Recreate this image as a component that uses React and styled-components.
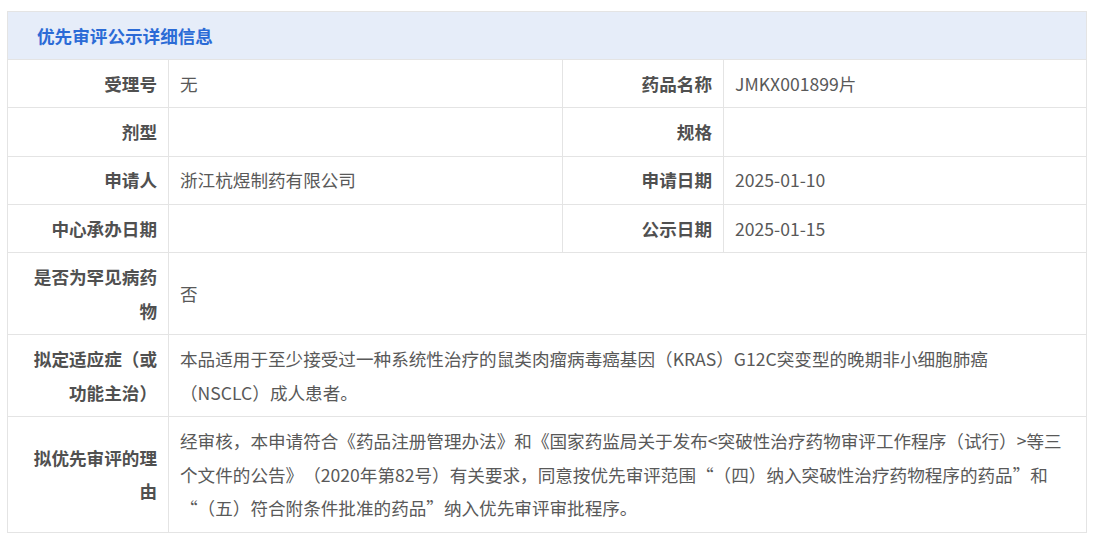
import React from 'react'
import styled, {createGlobalStyle} from 'styled-components'

const GlobalStyle = createGlobalStyle`
    body {
        margin: 0;
        background: #ffffff;
        font-family: "Noto Sans CJK SC", "Noto Sans", sans-serif;
        text-spacing-trim: space-all;
    }
`

// Data
const rows = [
    {pairs: [["受理号", "无"], ["药品名称", "JMKX001899片"]]},
    {pairs: [["剂型", ""], ["规格", ""]]},
    {pairs: [["申请人", "浙江杭煜制药有限公司"], ["申请日期", "2025-01-10"]]},
    {pairs: [["中心承办日期", ""], ["公示日期", "2025-01-15"]]},
    {label: "是否为罕见病药物", lines: ["否"]},
    {label: "拟定适应症（或功能主治）", lines: [
        "本品适用于至少接受过一种系统性治疗的鼠类肉瘤病毒癌基因（KRAS）G12C突变型的晚期非小细胞肺癌",
        "（NSCLC）成人患者。",
    ]},
    {label: "拟优先审评的理由", lines: [
        "经审核，本申请符合《药品注册管理办法》和《国家药监局关于发布<突破性治疗药物审评工作程序（试行）>等三",
        "个文件的公告》（2020年第82号）有关要求，同意按优先审评范围“（四）纳入突破性治疗药物程序的药品”和",
        "“（五）符合附条件批准的药品”纳入优先审评审批程序。",
    ]},
]

// UI Designs
const Page = styled.div`
    padding: 11px 15px 14px 7px;
`
const Panel = styled.div`
    width: 1080px;
    border: 1px solid #e4e4e4;
    box-sizing: border-box;
`
const Header = styled.div`
    height: 47px;
    background: #e6edf9;
    display: flex;
    align-items: center;
    padding-left: 29px;
    font-size: 17.6px;
    font-weight: 700;
    color: #2b6bd6;
    border-bottom: 1px solid #e4e4e4;
`
const Grid = styled.div`
    display: grid;
    grid-template-columns: 161px 394px 161px 1fr;
`
const Label = styled.div`
    padding: 6.75px 11px;
    text-align: right;
    font-size: 17.6px;
    line-height: 33.75px;
    font-weight: 700;
    color: #505050;
    border-right: 1px solid #e4e4e4;
    border-bottom: ${p => p.last ? "none" : "1px solid #e4e4e4"};
    display: flex;
    align-items: center;
    justify-content: flex-end;
`
const Value = styled.div`
    grid-column: ${p => p.wide ? "2 / 5" : "auto"};
    padding: 6.75px 11px;
    font-size: 17.6px;
    line-height: 33.75px;
    color: #595959;
    border-right: ${p => p.edge ? "none" : "1px solid #e4e4e4"};
    border-bottom: ${p => p.last ? "none" : "1px solid #e4e4e4"};
    display: flex;
    align-items: center;
    min-height: 33.75px;
`
const Text = styled.span``

function App() {
    return (
        <>
        <GlobalStyle/>
        <Page>
            <Panel>
                <Header>优先审评公示详细信息</Header>
                <Grid>
                    {rows.map((row, i) => {
                        const last = i === rows.length - 1
                        if (row.pairs) {
                            return row.pairs.map(([l, v], j) => (
                                <React.Fragment key={i + "-" + j}>
                                    <Label last={last}><Text>{l}</Text></Label>
                                    <Value last={last} edge={j === 1}>{v}</Value>
                                </React.Fragment>
                            ))
                        }
                        return (
                            <React.Fragment key={i}>
                                <Label last={last}><Text>{row.label}</Text></Label>
                                <Value wide edge last={last}>
                                    <Text>
                                        {row.lines.map((line, k) => (
                                            <React.Fragment key={k}>
                                                {k > 0 && <br/>}
                                                {line}
                                            </React.Fragment>
                                        ))}
                                    </Text>
                                </Value>
                            </React.Fragment>
                        )
                    })}
                </Grid>
            </Panel>
        </Page>
        </>
    )
}

export default App
